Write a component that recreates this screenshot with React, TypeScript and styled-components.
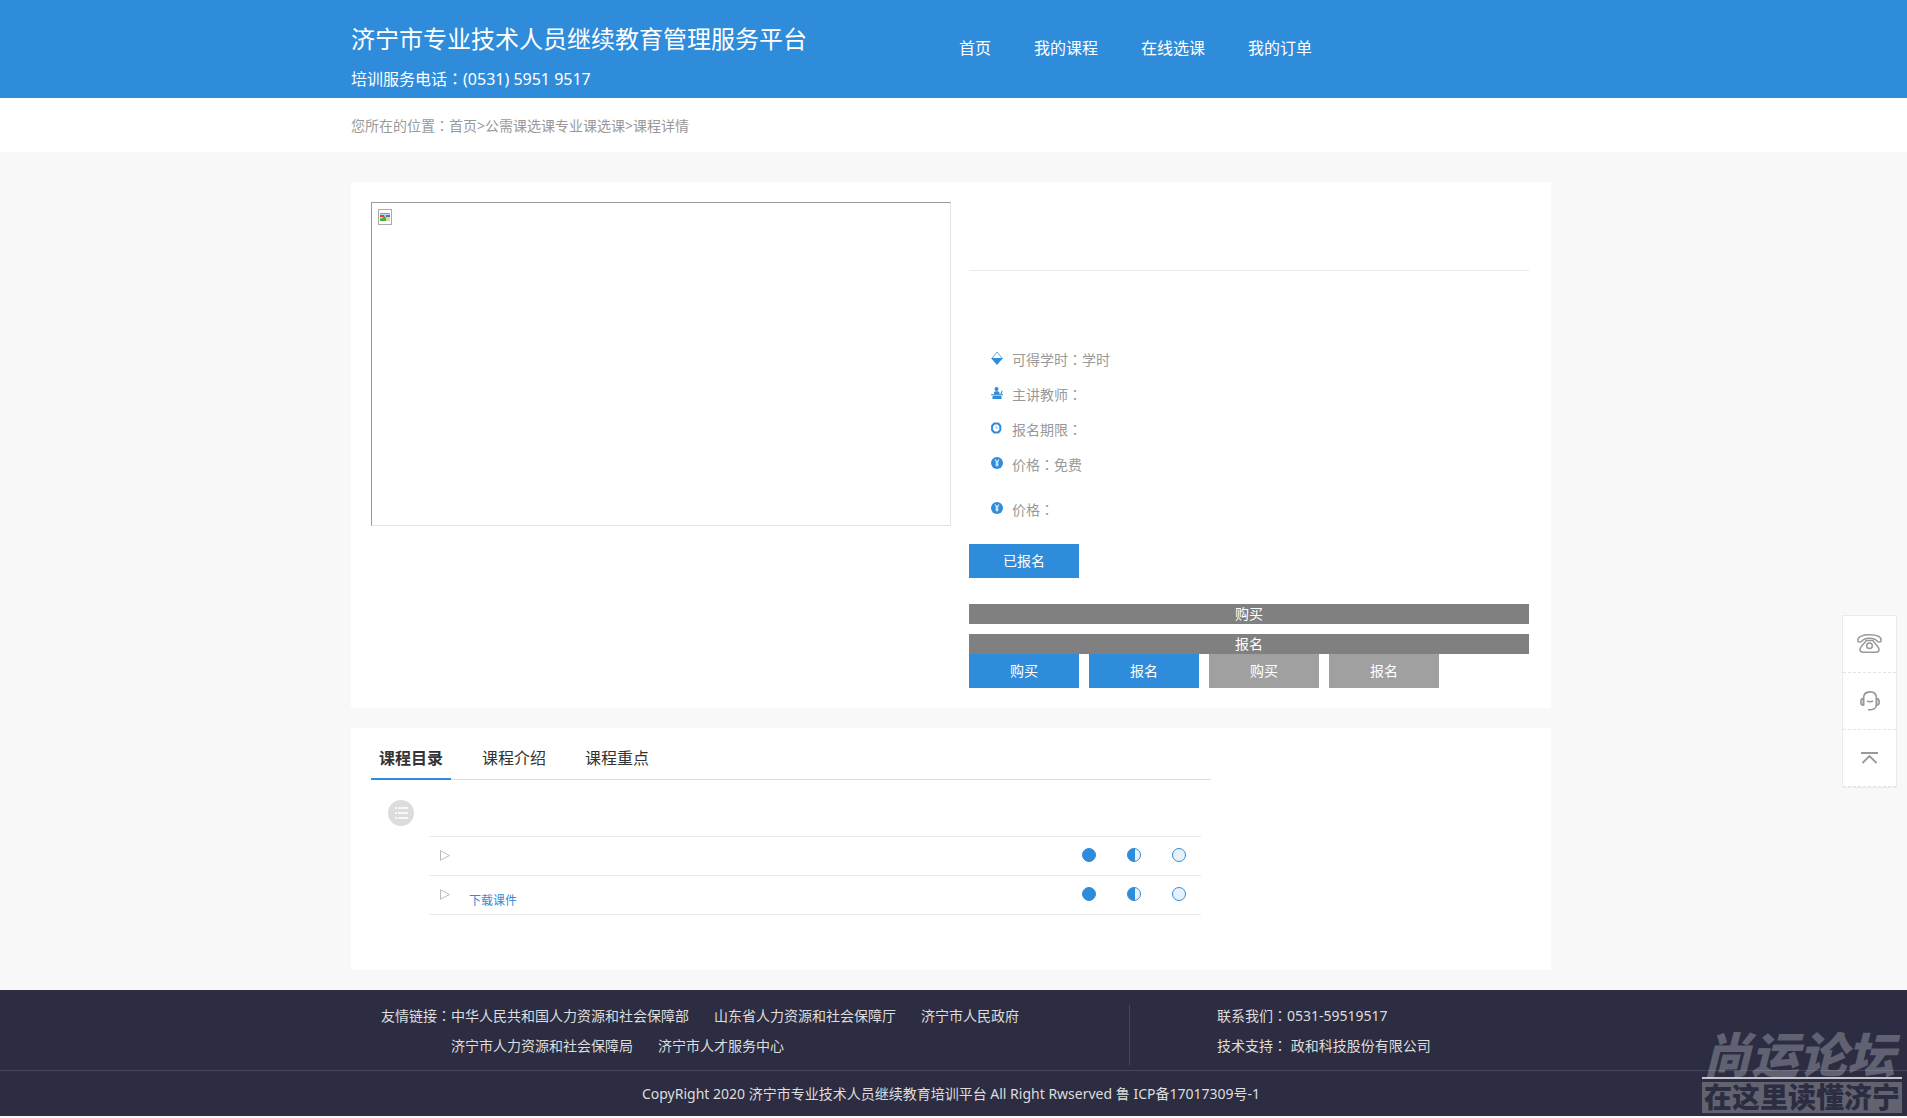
import React from 'react';
import styled, { createGlobalStyle } from 'styled-components';

const BLUE = '#2f8cdb';
const LINE = '#ebebeb';
const NAVY = '#2c2d42';

const GlobalStyle = createGlobalStyle`
  * { box-sizing: border-box; }
  body {
    margin: 0;
    background: #f8f8f8;
    color: #333;
    font: 400 14px/20px "Noto Sans", "Noto Sans CJK SC", sans-serif;
  }
  h1, p, ul, dl, dd { margin: 0; padding: 0; }
  ul { list-style: none; }
  a { color: inherit; text-decoration: none; }
  button { font: inherit; border: 0; padding: 0; background: none; cursor: pointer; }
  svg { display: block; }
`;

const Band = styled.div<{ $bg?: string }>`
  background: ${(p) => p.$bg ?? 'transparent'};
  padding-right: 5px;
`;

const Container = styled.div`
  max-width: 1200px;
  margin: 0 auto;
`;

const Centered = styled.span`
  font-family: "Noto Sans CJK TC", sans-serif;
  line-height: 1;
`;

const HeaderRow = styled(Container)`
  display: flex;
  height: 98px;
  color: #fff;
`;

const Brand = styled.div`
  width: 608px;
  padding-top: 21px;
`;

const Title = styled.h1`
  font-size: 24px;
  font-weight: 400;
  line-height: 36px;
`;

const Phone = styled.p`
  margin-top: 11px;
  font-size: 16px;
  line-height: 22px;
`;

const Nav = styled.nav`
  display: flex;
  gap: 43px;
  font-size: 16px;
  line-height: 96px;
`;

const Crumbs = styled(Container)`
  padding-top: 1px;
  line-height: 53px;
  color: #999;
`;

const Main = styled.main`
  padding: 30px 5px 20px 0;
`;

const Card = styled.section`
  max-width: 1200px;
  margin: 0 auto;
  background: #fff;

  & + & { margin-top: 20px; }
`;

const CourseCard = styled(Card)`
  display: flex;
  gap: 18px;
  padding: 20px 22px 20px 20px;
`;

const Cover = styled.div`
  width: 580px;
  height: 324px;
  padding: 6px;
  border: 1px solid;
  border-color: #9a9a9a #e3e3e3 #e3e3e3 #9a9a9a;
`;

const Detail = styled.div`
  flex: 1;
`;

const CourseName = styled.div`
  height: 69px;
  border-bottom: 1px solid ${LINE};
`;

const Facts = styled.ul`
  padding: 71px 0 17px 22px;
  color: #999;
`;

const Fact = styled.li<{ $spaced?: boolean }>`
  display: flex;
  align-items: center;
  gap: 9px;
  height: 35px;
  margin-top: ${(p) => (p.$spaced ? 10 : 0)}px;
  line-height: 35px;

  svg { margin-bottom: 3px; }
`;

const Action = styled.button<{ $muted?: boolean }>`
  width: 110px;
  height: 34px;
  color: #fff;
  background: ${(p) => (p.$muted ? '#a0a0a0' : BLUE)};
`;

const Bars = styled.div`
  display: grid;
  gap: 10px;
  margin-top: 26px;
`;

const Bar = styled.button`
  height: 20px;
  color: #fff;
  background: #808080;
`;

const Actions = styled.div`
  display: flex;
  gap: 10px;
`;

const OutlineCard = styled(Card)`
  padding: 0 20px 55px;
`;

const OutlineBody = styled.div`
  max-width: 840px;
`;

const Tabs = styled.div`
  display: flex;
  gap: 23px;
  height: 52px;
  border-bottom: 1px solid #ddd;
`;

const Tab = styled.button<{ $active?: boolean }>`
  height: 52px;
  padding: 10px 8px 0;
  font-size: 16px;
  font-weight: ${(p) => (p.$active ? 700 : 400)};
  color: #333;
  border-bottom: 2px solid ${(p) => (p.$active ? BLUE : 'transparent')};
`;

const Chapter = styled.div`
  padding: 20px 17px 10px;
`;

const Lessons = styled.ul`
  margin: 0 10px 0 58px;
  border-top: 1px solid ${LINE};
`;

const Lesson = styled.li`
  display: flex;
  align-items: center;
  height: 39px;
  padding: 0 15px 2px 11px;
  border-bottom: 1px solid ${LINE};
`;

const Download = styled.a`
  margin-left: 19px;
  padding-top: 14px;
  font-size: 12px;
  line-height: 18px;
  color: ${BLUE};
`;

const Marks = styled.div`
  display: flex;
  gap: 31px;
  margin-left: auto;
`;

const Footer = styled.footer`
  position: relative;
  color: #ddd;
  background: ${NAVY};
`;

const FooterTop = styled.div`
  padding: 15px 5px 5px 0;
  border-bottom: 1px solid #46475c;
`;

const FooterRow = styled(Container)`
  display: flex;
  padding-left: 30px;
  line-height: 30px;
`;

const Links = styled.dl`
  display: flex;
  width: 749px;
  height: 60px;
  margin-right: 87px;
  border-right: 1px solid #46475c;
`;

const Label = styled.dt`
  width: 70px;
  margin-top: -4px;
`;

const LinkRows = styled.dd`
  && { margin-top: -4px; }
`;

const LinkRow = styled.div`
  display: flex;
  gap: 25px;
`;

const Contact = styled.div`
  margin-top: -4px;
`;

const Copyright = styled.p`
  padding-right: 5px;
  text-align: center;
  line-height: 45px;
`;

const Watermark = styled.div`
  position: absolute;
  right: 5px;
  bottom: 3px;
  width: 200px;
  text-align: center;
  white-space: nowrap;
`;

const ForumName = styled.div`
  padding-right: 6px;
  font-size: 48px;
  font-weight: 900;
  font-style: italic;
  line-height: 44px;
  color: rgba(255, 255, 255, 0.26);
  border-bottom: 2px solid #c4c4cb;
`;

const ForumSlogan = styled.div`
  margin-top: 3px;
  font-size: 28px;
  font-weight: 900;
  line-height: 31px;
  color: ${NAVY};
  background: #62636f;
`;

const SideBar = styled.aside`
  position: fixed;
  top: 55%;
  right: 10px;
  width: 55px;
  background: #fff;
  border: 1px solid ${LINE};
`;

const SideButton = styled.button`
  display: flex;
  align-items: center;
  justify-content: center;
  width: 100%;
  height: 57px;
  border-bottom: 1px dashed #e3e3e3;
`;

const BrokenImage = () => (
  <svg width="14" height="16" viewBox="0 0 14 16" role="img" aria-label="课程封面">
    <rect x=".5" y=".5" width="13" height="15" fill="#fff" stroke="#aaa" />
    <rect x="2" y="4" width="10" height="8" fill="#b9d8f5" />
    <rect x="2" y="4" width="10" height="1" fill="#6ea2dc" />
    <rect x="2" y="6" width="4" height="2" fill="#d8432b" />
    <rect x="8" y="6" width="4" height="2" fill="#6a63d8" />
    <path d="M2 12V9l2 1 2-4 2 3v3z" fill="#4fae2f" />
    <path d="M8 12V9h4v3z" fill="#d9dd9a" />
  </svg>
);

const HoursIcon = () => (
  <svg width="12" height="14" viewBox="0 0 12 14">
    <path d="M.8 7.500 6 1l5.200 6.500" fill="none" stroke="#62a8e6" />
    <path d="M0 7h12L6 14z" fill={BLUE} />
  </svg>
);

const TeacherIcon = () => (
  <svg width="12" height="12" viewBox="0 0 12 12" fill={BLUE}>
    <circle cx="5.500" cy="2" r="2" />
    <path d="M3 7.500V6q0-1.500 1.700-1.700h2.100Q8.500 4.500 8.500 6v1.500zM9.300 7l1.500-3.500.9.400L10.500 7.500z" />
    <path d="M0 7.300h12v1H0zM1.500 8.800h9V12h-9z" />
  </svg>
);

const TermIcon = () => (
  <svg width="12" height="12" viewBox="0 0 12 12" fill="none" stroke={BLUE}>
    <path d="M3.200 1.500h4L9.300 4v4L7.200 10.500h-4L1.100 8V4z" strokeWidth="2" strokeLinejoin="round" />
    <path d="M5 3.800v2.400h2" stroke="#8cc0ec" />
  </svg>
);

const PriceIcon = () => (
  <svg width="12" height="12" viewBox="0 0 12 12">
    <circle cx="6" cy="6" r="6" fill={BLUE} />
    <path d="M4 2.500 6 5.300l2-2.800M6 5v4.500M4.500 6h3M4.500 7.800h3" fill="none" stroke="#e4f1fc" strokeWidth="1.200" />
  </svg>
);

const ListIcon = () => (
  <svg width="26" height="26" viewBox="0 0 26 26">
    <circle cx="13" cy="13" r="13" fill="#dcdcdc" />
    <path d="M7 8h2M10 8h10M7 13h2M10 13h10M7 18h2M10 18h10" stroke="#fff" strokeWidth="1.500" />
  </svg>
);

const PlayIcon = () => (
  <svg width="10" height="11" viewBox="0 0 10 11">
    <path d="M.5.700v9.600L9.300 5.500z" fill="none" stroke="#bbb" />
  </svg>
);

const Mark = ({ level }: { level: 'full' | 'half' | 'empty' }) => (
  <svg width="14" height="14" viewBox="0 0 14 14">
    <circle cx="7" cy="7" r="6.500" fill={level === 'full' ? BLUE : '#e6f1fc'} stroke={BLUE} />
    {level === 'half' && <path d="M8 .5H7a6.500 6.500 0 0 0 0 13h1z" fill={BLUE} />}
  </svg>
);

const TelephoneIcon = () => (
  <svg width="25" height="19" viewBox="0 0 25 19" fill="none" stroke="#999" strokeWidth="1.500">
    <path d="M.8 6.500C.8 2.500 6 .8 12.500.8s11.700 1.700 11.700 5.700c0 1.700-2.200 2-3.700.9L18 5.300C15.500 3.800 9.500 3.800 7 5.300L4.500 7.400C3 8.500.8 8.200.8 6.500z" />
    <path d="M9 6.500h7c1 2.800 6 6 6 9 0 2-1.200 2.700-3 2.700H6c-1.800 0-3-.7-3-2.700 0-3 5-6.200 6-9z" />
    <circle cx="12.500" cy="11.800" r="2.800" />
  </svg>
);

const HeadsetIcon = () => (
  <svg width="20" height="20" viewBox="0 0 20 20" fill="none" stroke="#999" strokeWidth="1.600">
    <path d="M3.500 14V7.500C3.500 3.500 6 .9 10 .9s6.500 2.600 6.500 6.600V13c0 3.500-2.500 5.700-6 5.700H8" />
    <path d="M3.500 7.500C1.500 7.500.8 8.500.8 11s.7 3.200 2.700 3.200zM16.500 7.500c2 0 2.700 1 2.700 3.500s-.7 3.200-2.700 3.200z" />
    <path d="M7 9.800c1.500 1.200 4.500 1.200 6 0" />
  </svg>
);

const TopIcon = () => (
  <svg width="17" height="12" viewBox="0 0 17 12" fill="none" stroke="#999">
    <path d="M0 1h17" strokeWidth="2" />
    <path d="M1.500 11 8.500 4l7 7" strokeWidth="1.800" />
  </svg>
);

const Colon = () => <Centered>：</Centered>;

const facts = [
  { icon: <HoursIcon />, label: '可得学时', value: '学时' },
  { icon: <TeacherIcon />, label: '主讲教师', value: '' },
  { icon: <TermIcon />, label: '报名期限', value: '' },
  { icon: <PriceIcon />, label: '价格', value: '免费' },
  { icon: <PriceIcon />, label: '价格', value: '', spaced: true },
];

const linkRows = [
  ['中华人民共和国人力资源和社会保障部', '山东省人力资源和社会保障厅', '济宁市人民政府'],
  ['济宁市人力资源和社会保障局', '济宁市人才服务中心'],
];

const LessonRow = ({ download }: { download?: boolean }) => (
  <Lesson>
    <PlayIcon />
    {download && <Download href="#">下载课件</Download>}
    <Marks>
      <Mark level="full" />
      <Mark level="half" />
      <Mark level="empty" />
    </Marks>
  </Lesson>
);

export default function App() {
  return (
    <>
      <GlobalStyle />
      <Band as="header" $bg={BLUE}>
        <HeaderRow>
          <Brand>
            <Title>济宁市专业技术人员继续教育管理服务平台</Title>
            <Phone>培训服务电话<Colon />(0531) 5951 9517</Phone>
          </Brand>
          <Nav>
            {['首页', '我的课程', '在线选课', '我的订单'].map((item) => (
              <a key={item} href="#">{item}</a>
            ))}
          </Nav>
        </HeaderRow>
      </Band>
      <Band $bg="#fff">
        <Crumbs>
          您所在的位置<Colon /><a href="#">首页</a>&gt;<a href="#">公需课选课</a><a href="#">专业课选课</a>&gt;课程详情
        </Crumbs>
      </Band>
      <Main>
        <CourseCard>
          <Cover><BrokenImage /></Cover>
          <Detail>
            <CourseName />
            <Facts>
              {facts.map((f, i) => (
                <Fact key={i} $spaced={f.spaced}>
                  {f.icon}
                  <span>{f.label}<Colon />{f.value}</span>
                </Fact>
              ))}
            </Facts>
            <Actions><Action>已报名</Action></Actions>
            <Bars>
              <Bar>购买</Bar>
              <Bar>报名</Bar>
            </Bars>
            <Actions>
              <Action>购买</Action>
              <Action>报名</Action>
              <Action $muted>购买</Action>
              <Action $muted>报名</Action>
            </Actions>
          </Detail>
        </CourseCard>
        <OutlineCard>
          <OutlineBody>
            <Tabs role="tablist">
              <Tab role="tab" aria-selected $active>课程目录</Tab>
              <Tab role="tab">课程介绍</Tab>
              <Tab role="tab">课程重点</Tab>
            </Tabs>
            <Chapter><ListIcon /></Chapter>
            <Lessons>
              <LessonRow />
              <LessonRow download />
            </Lessons>
          </OutlineBody>
        </OutlineCard>
      </Main>
      <Footer>
        <FooterTop>
          <FooterRow>
            <Links>
              <Label>友情链接<Colon /></Label>
              <LinkRows>
                {linkRows.map((row) => (
                  <LinkRow key={row[0]}>
                    {row.map((name) => <a key={name} href="#">{name}</a>)}
                  </LinkRow>
                ))}
              </LinkRows>
            </Links>
            <Contact>
              <p>联系我们<Colon />0531-59519517</p>
              <p>技术支持<Colon /> 政和科技股份有限公司</p>
            </Contact>
          </FooterRow>
        </FooterTop>
        <Copyright>CopyRight 2020 济宁市专业技术人员继续教育培训平台 All Right Rwserved 鲁 ICP备17017309号-1</Copyright>
        <Watermark>
          <ForumName>尚运论坛</ForumName>
          <ForumSlogan>在这里读懂济宁</ForumSlogan>
        </Watermark>
      </Footer>
      <SideBar>
        <SideButton aria-label="电话"><TelephoneIcon /></SideButton>
        <SideButton aria-label="客服"><HeadsetIcon /></SideButton>
        <SideButton aria-label="返回顶部"><TopIcon /></SideButton>
      </SideBar>
    </>
  );
}
